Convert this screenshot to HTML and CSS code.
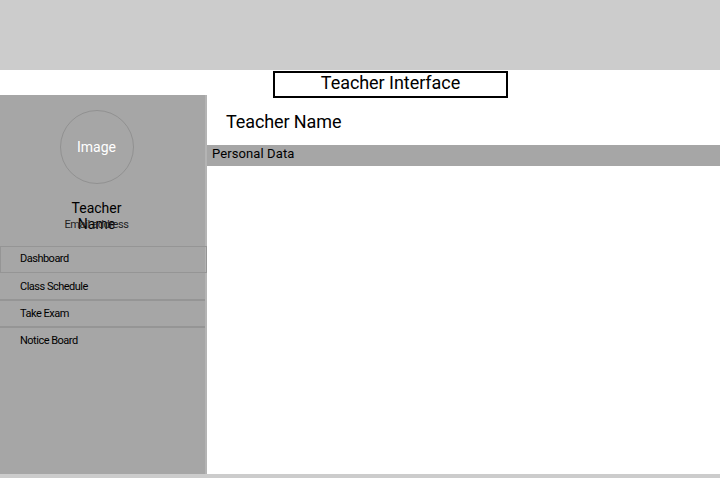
FILE: index.html
```html
<!DOCTYPE html>
<html>
<head>
<meta charset="utf-8">
<link rel="stylesheet" href="styles.css">
</head>
<body>
<div class="page">
  <header class="topbar"></header>
  <div class="title-row">
    <div class="title-box">Teacher Interface</div>
  </div>
  <div class="main">
    <aside class="sidebar">
      <div class="profile">
        <div class="avatar">Image</div>
        <div class="name">Teacher Name</div>
        <div class="email">Email address</div>
      </div>
      <nav class="menu">
        <div class="item item-active">Dashboard</div>
        <div class="item item-line">Class Schedule</div>
        <div class="item item-line item-exam">Take Exam</div>
        <div class="item item-last">Notice Board</div>
      </nav>
    </aside>
    <section class="content">
      <h1 class="teacher-name">Teacher Name</h1>
      <div class="section-bar">Personal Data</div>
    </section>
  </div>
  <footer class="bottombar"></footer>
</div>
</body>
</html>
```
FILE: styles.css
```css
html, body {
  margin: 0;
  padding: 0;
  background: #ffffff;
  font-family: Roboto, "Liberation Sans", sans-serif;
  color: #000;
}
.page {
  width: 720px;
  height: 478px;
  display: flex;
  flex-direction: column;
  overflow: hidden;
}
.topbar {
  height: 70px;
  background: #cccccc;
  flex: none;
}
.title-row {
  height: 25px;
  flex: none;
  display: flex;
  align-items: flex-start;
  position: relative;
  z-index: 1;
}
.title-box {
  margin-left: 273px;
  margin-top: 1px;
  width: 231px;
  height: 23px;
  border: 2px solid #000;
  font-size: 18px;
  line-height: 20px;
  text-align: center;
  letter-spacing: -0.05px;
  background: #fff;
}
.main {
  flex: 1;
  display: flex;
  min-height: 0;
}
.sidebar {
  width: 205px;
  background: #a6a6a6;
  border-right: 2px solid #b4b4b4;
  flex: none;
  display: flex;
  flex-direction: column;
}
.profile {
  display: flex;
  flex-direction: column;
  align-items: center;
  padding-right: 12px;
  padding-top: 15px;
  height: 136px;
}
.avatar {
  width: 72px;
  height: 72px;
  border: 1px solid #919191;
  border-radius: 50%;
  color: #fff;
  font-size: 14px;
  display: flex;
  align-items: center;
  justify-content: center;
  flex: none;
}
.name {
  margin-top: 16px;
  width: 64px;
  height: 16px;
  font-size: 14px;
  line-height: 16px;
  text-align: center;
  flex: none;
}
.email {
  margin-top: 2px;
  font-size: 11px;
  line-height: 14px;
  color: #222;
  letter-spacing: -0.4px;
}
.menu {
  display: flex;
  flex-direction: column;
}
.item {
  height: 27px;
  line-height: 25px;
  padding-left: 20px;
  font-size: 11px;
  letter-spacing: -0.5px;
  box-sizing: border-box;
}
.item-active {
  border: 1px solid #959595;
  line-height: 23px;
  padding-left: 19px;
  width: 207px;
  margin-bottom: 1px;
}
.item-line {
  border-bottom: 2px solid #959595;
}
.item-exam {
  line-height: 26px;
}
.content {
  flex: 1;
  display: flex;
  flex-direction: column;
}
.teacher-name {
  margin: 0;
  padding: 16px 0 0 19px;
  height: 34px;
  font-size: 18px;
  font-weight: normal;
  line-height: 22px;
  letter-spacing: -0.1px;
}
.section-bar {
  height: 21px;
  background: #a6a6a6;
  font-size: 13px;
  line-height: 18px;
  padding-left: 5px;
  letter-spacing: 0.1px;
}
.bottombar {
  height: 4px;
  background: #cccccc;
  flex: none;
}
```
